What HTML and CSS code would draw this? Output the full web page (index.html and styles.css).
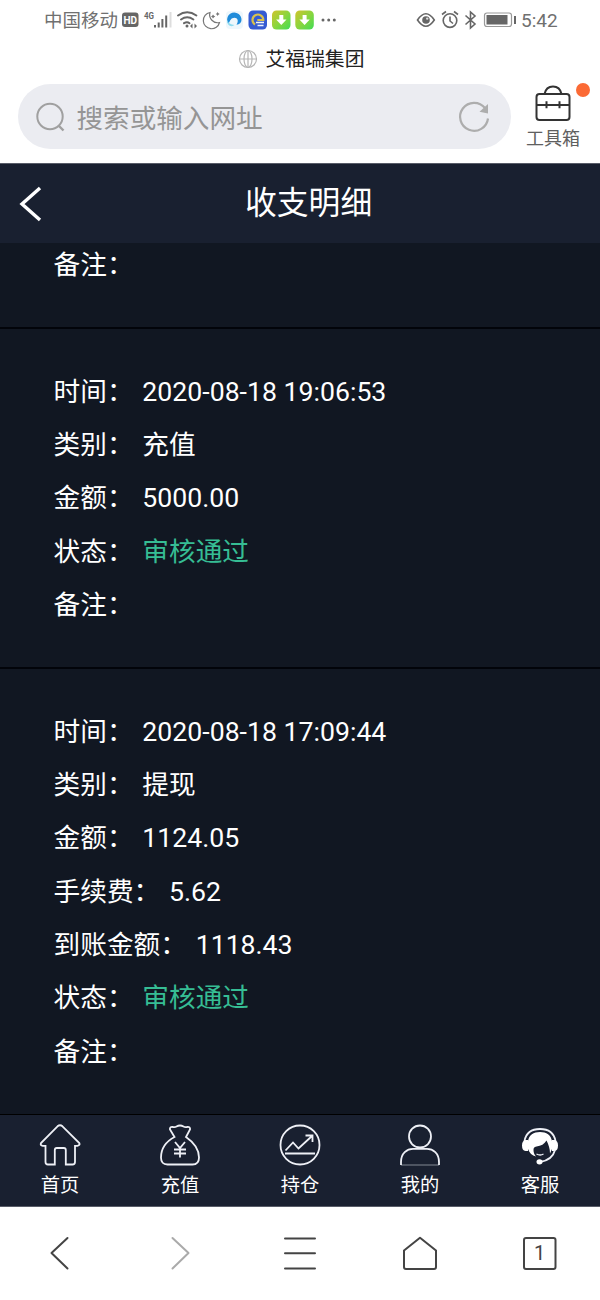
FILE: index.html
```html
<!DOCTYPE html>
<html lang="zh-CN">
<head>
<meta charset="utf-8">
<title>收支明细</title>
<link rel="stylesheet" href="styles.css">
</head>
<body>
<div class="screen">
  <div class="status">
    <span class="carrier">中国移动</span>
    <svg class="status-icons" width="220" height="40" viewBox="120 0 220 40">
      <rect x="122" y="12.500" width="16.500" height="14.500" rx="3" fill="#666"/>
      <text x="130.300" y="23.700" class="hd" text-anchor="middle">HD</text>
      <text x="144" y="18.500" class="g4" textLength="10" lengthAdjust="spacingAndGlyphs">4G</text>
      <path d="M155 25v2.500M158.700 22.500v5M162.400 19v8.500M166.200 15.500v12" stroke="#666" stroke-width="2"/>
      <path d="M170.500 12v15.500" stroke="#ddd" stroke-width="2"/>
      <g fill="none" stroke="#666" stroke-width="2" stroke-linecap="round"><path d="M178 15.500q9.200-6.500 18.400 0M181 19.500q6.200-4.300 12.400 0M184 23.200q3.200-1.800 5.500 0"/></g>
      <circle cx="187" cy="26" r="1.500" fill="#666"/><path d="M190 26l2.500-2.500v5zM197 26l-2.500-2.500v5z" fill="#666"/>
      <path d="M210 12.500A8.200 8.200 0 1 0 219.500 22.500 8 8 0 0 1 210 12.500z" fill="none" stroke="#777" stroke-width="1.200"/>
      <path d="M213 14.500l1 1.300 1.300.7-1.300.7-1 1.300-.8-1.300-1.200-.7 1.200-.7zM217.600 12l.8 1.300 1.300.7-1.300.7-.8 1.300-.7-1.300-1.200-.7 1.200-.7z" fill="#777"/>
      <rect x="226" y="11" width="17" height="18" rx="4" fill="#eef7fc"/>
      <path d="M228.500 24A7.200 7.200 0 1 1 241.500 20c0 2.500-2 4.300-5 4.800 2.500-4 1-7-2-7-3.500 0-4.500 3-6 6.200z" fill="#208cda"/>
      <path d="M227 19.500c1 4 4 5 7.500 5.500-2.500 2.500-8 1-7.500-5.500z" fill="#8fdcf0"/>
      <rect x="248.500" y="10.500" width="18.500" height="19" rx="4.500" fill="#355bd2"/>
      <path d="M255 24.500a5.400 5.400 0 1 1 8.300-4.500h-6" fill="none" stroke="#d9c04c" stroke-width="2.200"/>
      <path d="M256 22.500h8M257.500 25.500h6" stroke="#eef2fa" stroke-width="1.500"/>
      <defs><linearGradient id="dl" x2="1" y2="1"><stop offset="0" stop-color="#d1c32c"/><stop offset=".5" stop-color="#8cd53d"/><stop offset="1" stop-color="#3fdc55"/></linearGradient></defs>
      <rect x="272" y="10.500" width="18.500" height="19" rx="4.500" fill="url(#dl)"/>
      <rect x="295.300" y="10.500" width="18.500" height="19" rx="4.500" fill="url(#dl)"/>
      <path d="M279.300 15h4v4.500h3.200l-5.200 5.500-5.200-5.500h3.200z" fill="#fff"/>
      <path d="M302.600 15h4v4.500h3.200l-5.200 5.500-5.200-5.500h3.200z" fill="#fff"/>
      <g fill="#666"><circle cx="323" cy="20" r="1.500"/><circle cx="328.700" cy="20" r="1.500"/><circle cx="334.300" cy="20" r="1.500"/></g>
    </svg>
    <svg class="status-right" width="104" height="40" viewBox="414 0 104 40" fill="none" stroke="#666" stroke-width="1.600">
      <path d="M417.500 20q8.400-12.500 16.800 0-8.400 12.500-16.800 0z"/><circle cx="426" cy="20" r="3.800" fill="#666" stroke="none"/><circle cx="427.200" cy="18.600" r="1.200" fill="#ddd" stroke="none"/>
      <circle cx="450" cy="20.600" r="6.800"/><path d="M450 16.500v4.500l3 2.500M442 14.500l4-3M458 14.500l-4-3"/>
      <path d="M465.500 15.500l9.500 8.500-4.500 4V12l4.500 4-9.500 8.500"/>
      <rect x="484.500" y="13" width="27" height="13.500" rx="2.500" stroke="#999" stroke-width="1.200"/><rect x="486.500" y="15" width="21" height="9.500" fill="#666" stroke="none"/><path d="M515 16v8" stroke-width="2"/>
    </svg>
    <span class="clock">5:42</span>
  </div>

  <div class="site">
    <svg width="20" height="20" viewBox="0 0 20 20" fill="none" stroke="#b5b5b5" stroke-width="1.200"><circle cx="10" cy="10" r="8.500"/><ellipse cx="10" cy="10" rx="4" ry="8.500"/><path d="M10 1.500v17M1.500 10h17"/></svg>
    <span>艾福瑞集团</span>
  </div>

  <div class="browser">
    <div class="search">
      <svg width="30" height="32" viewBox="0 0 30 32" fill="none" stroke="#a0a0a0" stroke-width="2"><circle cx="14" cy="15.500" r="12.700"/><path d="M23 25l4.500 4.500" stroke-width="2.400"/></svg>
      <span class="placeholder">搜索或输入网址</span>
      <svg width="34" height="34" viewBox="0 0 34 34" fill="none" stroke="#adadad" stroke-width="2.200"><path d="M28 8A14 14 0 1 0 31 18.500"/><path d="M31 4v9.500l-8.500-1.800z" fill="#adadad" stroke="none"/></svg>
    </div>
    <div class="tools">
      <svg width="36" height="38" viewBox="0 0 36 38" fill="none" stroke="#333" stroke-width="2"><rect x="1.500" y="10" width="33" height="26" rx="3"/><path d="M9.500 10c1-4.700 4-7.500 8.500-7.500s7.500 2.800 8.500 7.500M1.500 21h33M11.500 17.300v7M24.500 17.300v7"/></svg>
      <span>工具箱</span>
      <i class="dot"></i>
    </div>
  </div>

  <header class="header">
    <svg class="back" width="24" height="36" viewBox="0 0 24 36" fill="none" stroke="#fff" stroke-width="3.400"><path d="M22 2L4 18l18 16"/></svg>
    <h1>收支明细</h1>
  </header>

  <main class="list">
    <section class="entry"><p><b>备注：</b></p></section>
    <section class="entry">
      <p><b>时间：</b><span>2020-08-18 19:06:53</span></p>
      <p><b>类别：</b><span>充值</span></p>
      <p><b>金额：</b><span>5000.00</span></p>
      <p><b>状态：</b><span class="ok">审核通过</span></p>
      <p><b>备注：</b></p>
    </section>
    <section class="entry">
      <p><b>时间：</b><span>2020-08-18 17:09:44</span></p>
      <p><b>类别：</b><span>提现</span></p>
      <p><b>金额：</b><span>1124.05</span></p>
      <p><b>手续费：</b><span>5.62</span></p>
      <p><b>到账金额：</b><span>1118.43</span></p>
      <p><b>状态：</b><span class="ok">审核通过</span></p>
      <p><b>备注：</b></p>
    </section>
  </main>

  <nav class="tabs">
    <a><svg class="icon" viewBox="0 0 42 42"><path d="M18.500 2.300q2.500-2 5 0L40.300 19q1 2.300-1.800 2.800H36V38q0 2.500-2.500 2.500h-6.700V26q0-2-2-2h-7q-2 0-2 2v14.500H9Q6.500 40.500 6.500 38V21.800H3.800Q1 21.500 2 19z"/></svg><span>首页</span></a>
    <a><svg class="icon" viewBox="0 0 42 42"><path d="M15.500 13L11 5.500q-.5-3 3-2.500 2 .5 3.500-.5 3.500-2 7 0 1.500 1 3.500.5 3.500-.5 3 2.500L27 13q13 9 13 20.500 0 7-6.500 7h-25q-6.500 0-6.500-7C2 22 9 16.500 15.500 13z"/><path d="M16 18l5 6 5-6M21 24v9.500M15 25.500h12M15 29.500h12"/></svg><span>充值</span></a>
    <a><svg class="icon" viewBox="0 0 42 42"><circle cx="21" cy="21" r="19.500"/><path d="M6 29.500h30M6.500 26.500l7.500-8 5.500 6L33 12M26.500 11.500h7v6.500"/></svg><span>持仓</span></a>
    <a><svg class="icon" viewBox="0 0 42 42"><circle cx="21" cy="12.500" r="11"/><path d="M2 41v-3C2 29 8 24.800 14 24.800h14C34 24.800 40 29 40 38v3"/><path d="M2 41h38" stroke-width=".5"/></svg><span>我的</span></a>
    <a><svg class="icon" viewBox="0 0 42 42"><path d="M5.500 17C7 9 13 5 21 5s14 4 15.500 12" stroke-width="1.800"/><path d="M9 17C10 11 14.500 8 21 8s11 3 12 9v8l-2 4.500c0-5-1.500-9-3.500-13-2 3.500-5.500 5.500-10 6-2.500.5-3 1.500-3 3.500 0 2.500.8 4.500 2.500 6.500-4-1-6.500-3.500-8-7.500zM9 16v11H6.500q-3.500-.5-3.500-5.500T6.500 16zM33 16v11h2.500q3.500-.5 3.500-5.500T35.500 16z" fill="#fff" stroke="none"/><path d="M17.500 30q3.700 2 7 0" stroke-width="1.300"/><path d="M36 26q-2.500 10-15 12"/><ellipse cx="20.500" cy="37.800" rx="3" ry="2.600" fill="#fff" stroke="none"/></svg><span>客服</span></a>
  </nav>

  <footer class="bottom">
    <svg viewBox="0 0 40 44"><path d="M27.500 7L11.500 22l16 15.500"/></svg>
    <svg class="disabled" viewBox="0 0 40 44"><path d="M12.500 7l16 15-16 15.500"/></svg>
    <svg viewBox="0 0 40 44"><path d="M5 7.500h30M5 22.200h30M5 37.500h30"/></svg>
    <svg viewBox="0 0 40 44"><path d="M20 6.800L36 19.500V36q0 2-2 2H6q-2 0-2-2V19.500z"/></svg>
    <svg viewBox="0 0 40 44"><rect x="4" y="7" width="31.500" height="31" rx="2"/><text x="19.500" y="29" text-anchor="middle" class="count">1</text></svg>
  </footer>
</div>
</body>
</html>
```
FILE: styles.css
```css
* { box-sizing: border-box; }
body { margin: 0; background: #fff; font-family: Roboto, "Noto Sans CJK SC", sans-serif; }
svg { display: block; flex: none; }
.screen { width: 600px; height: 1300px; display: flex; flex-direction: column; overflow: hidden; }

.status { height: 40px; padding-left: 44px; display: flex; align-items: center; color: #707070; font-size: 18.500px; line-height: 40px; white-space: nowrap; }
.status > span { padding-top: 2px; }
.carrier { width: 76px; }
.status-right { margin-left: 74px; }
.clock { margin-left: 3px; font-size: 19px; }
.hd { font: bold 10px Roboto, sans-serif; fill: #fff; }
.g4 { font: bold 9px "Roboto", sans-serif; fill: #666; }

.site { height: 38px; display: flex; align-items: center; gap: 8px; padding-left: 237.500px; font-size: 19.800px; color: #222; line-height: 38px; }
.site span { padding-top: 1px; }
.browser { height: 85px; display: flex; align-items: flex-start; padding: 6px 0 0 18px; }
.search { width: 492.500px; height: 65px; border-radius: 33px; background: #ebecf1; display: flex; align-items: center; padding: 0 20px 0 17.500px; }
.placeholder { flex: 1; margin-left: 11px; padding-top: 4px; font-size: 26.600px; color: #959595; line-height: 61px; }
.tools { position: relative; width: 85px; display: flex; flex-direction: column; align-items: center; color: #606060; font-size: 18px; line-height: 24px; }
.tools span { margin-top: 5px; }
.dot { position: absolute; right: 5.500px; top: -1px; width: 14px; height: 14px; border-radius: 50%; background: #fb6a35; }

.header { height: 80px; background: #192030; border-top: 1px solid #585c68; display: flex; align-items: center; padding-left: 18px; color: #fff; }
.header h1 { margin: 0 0 0 203px; font-size: 31.800px; font-weight: 400; line-height: 78px; padding-bottom: 2px; }

.list { height: 871px; background: #111722; overflow: hidden; display: flex; flex-direction: column; justify-content: flex-end; color: #fff; }
.entry { flex: none; padding: 36px 0 36px 53.600px; }
.entry + .entry { border-top: 2px solid #02040a; padding-top: 35.300px; }
.entry p { margin: 0; height: 53.330px; line-height: 55.330px; font-size: 26.660px; display: flex; }
.entry b { font-weight: 400; }
.entry span { margin-left: 8.800px; }
.entry .ok { color: #36bd94; }

.tabs { height: 93px; background: #192030; border-top: 1px solid #000; border-bottom: 1px solid #585c68; display: grid; grid-template-columns: repeat(5, 1fr); color: #fff; font-size: 19.300px; line-height: 28px; }
.tabs a { display: flex; flex-direction: column; align-items: center; padding-top: 9px; }
.icon { width: 42px; height: 42px; fill: none; stroke: #eef0f6; stroke-width: 1.800; }
.tabs span { margin-top: 5.500px; }

.bottom { height: 93px; padding-bottom: 2px; display: grid; grid-template-columns: repeat(5, 1fr); align-items: center; justify-items: center; }
.bottom svg { width: 40px; height: 44px; fill: none; stroke: #444; stroke-width: 2; stroke-linecap: round; stroke-linejoin: round; }
.bottom .disabled { stroke: #aaa; }
.bottom .count { font: 20px Roboto, sans-serif; fill: #444; stroke: none; }
```
